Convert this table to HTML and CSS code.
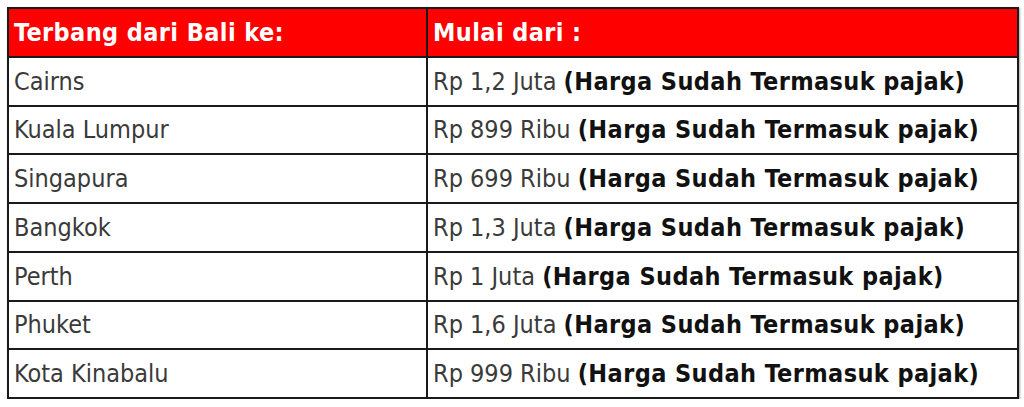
FILE: index.html
```html
<!DOCTYPE html>
<html>
<head>
<meta charset="utf-8">
<link rel="stylesheet" href="styles.css">
</head>
<body>
<table class="fares">
  <tr class="head"><th class="dest">Terbang dari Bali ke:</th><th class="price">Mulai dari :</th></tr>
  <tr><td class="dest">Cairns</td><td class="price">Rp 1,2 Juta <b>(Harga Sudah Termasuk pajak)</b></td></tr>
  <tr><td class="dest">Kuala Lumpur</td><td class="price">Rp 899 Ribu <b>(Harga Sudah Termasuk pajak)</b></td></tr>
  <tr><td class="dest">Singapura</td><td class="price">Rp 699 Ribu <b>(Harga Sudah Termasuk pajak)</b></td></tr>
  <tr><td class="dest">Bangkok</td><td class="price">Rp 1,3 Juta <b>(Harga Sudah Termasuk pajak)</b></td></tr>
  <tr><td class="dest">Perth</td><td class="price">Rp 1 Juta <b>(Harga Sudah Termasuk pajak)</b></td></tr>
  <tr><td class="dest">Phuket</td><td class="price">Rp 1,6 Juta <b>(Harga Sudah Termasuk pajak)</b></td></tr>
  <tr><td class="dest">Kota Kinabalu</td><td class="price">Rp 999 Ribu <b>(Harga Sudah Termasuk pajak)</b></td></tr>
</table>
</body>
</html>
```
FILE: styles.css
```css
html, body { margin: 0; padding: 0; background: #fff; }
body { padding: 7px 0 0 7px; }
.fares {
  border-collapse: collapse;
  width: 1012px;
  font-family: "DejaVu Sans Condensed", "DejaVu Sans", sans-serif;
  font-size: 25px;
  color: #3a3a3a;
  box-shadow: 1px 1px 2px rgba(0,0,0,0.35);
}
.fares th, .fares td {
  border: 2px solid #1a1a1a;
  height: 46.75px;
  padding: 0 0 0 5px;
  text-align: left;
  vertical-align: middle;
  white-space: nowrap;
}
.fares th {
  background: #ff0000;
  color: #fff;
  font-weight: bold;
  letter-spacing: 0.4px;
}
.fares .dest { width: 412px; }
.fares b { color: #111; letter-spacing: 0.4px; }
```
